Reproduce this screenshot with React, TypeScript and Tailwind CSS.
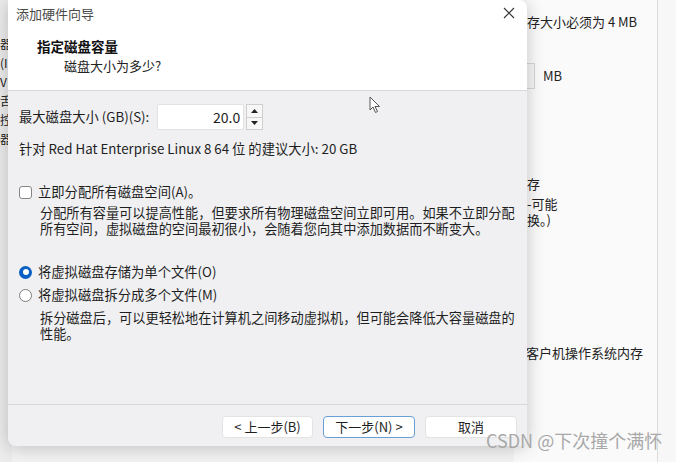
const FONT = "font-['Noto_Sans_CJK_SC','Noto_Sans',sans-serif]";

function BackWindow() {
  return (
    <div className="absolute inset-0 flex">
      {/* left strip of the window behind */}
      <div className="w-[12px] h-full bg-[#ececec] flex flex-col pt-[34px] text-[12px] leading-[19px] text-[#222] overflow-hidden">
        <span>器</span>
        <span>(I</span>
        <span>V</span>
        <span>舌</span>
        <span>控</span>
        <span>器</span>
      </div>
      <div className="w-[502px] h-full bg-[#f3f3f3]" />
      {/* right part of the window behind */}
      <div className="w-[143px] h-full bg-[#fafafa] flex flex-col text-[13px] text-[#222] whitespace-nowrap">
        <div className="mt-[13px] leading-[18px]">内存大小必须为 4 MB</div>
        <div className="mt-[32px] flex items-center">
          <div className="w-[21px] h-[26px] border border-[#d6d6d6] bg-[#f6f6f6]" />
          <span className="ml-[8px] leading-[18px]">MB</span>
        </div>
        <div className="mt-[86px] leading-[18px]">内存</div>
        <div className="mt-[3px] leading-[16px]">交-可能</div>
        <div className="leading-[16px]">交换。)</div>
        <div className="mt-[116px] ml-[12px] leading-[18px]">客户机操作系统内存</div>
      </div>
      <div className="w-[19px] h-full border-l border-[#dcdcdc] bg-[#f7f7f7]" />
    </div>
  );
}

function Radio({ checked }: { checked?: boolean }) {
  if (checked) {
    return (
      <div className="w-[13px] h-[13px] rounded-full bg-[#0a5fc4] flex items-center justify-center">
        <div className="w-[6px] h-[6px] rounded-full bg-white" />
      </div>
    );
  }
  return <div className="w-[13px] h-[13px] rounded-full border border-[#7d7d7d] bg-white" />;
}

function Dialog() {
  return (
    <div className="absolute left-[8px] top-0 w-[519px] h-[446px] flex flex-col rounded-tr-[8px] rounded-b-[8px] overflow-hidden bg-[#f0f0f2] shadow-[0_2px_18px_rgba(0,0,0,0.22)]">
      {/* header */}
      <div className="bg-white h-[91px] flex flex-col border-b border-[#d7d7d7] shrink-0">
        <div className="h-[28px] flex items-center justify-between pl-[8px] pr-[12px]">
          <span className="text-[13px] leading-[18px] text-[#4a4a4a]">添加硬件向导</span>
          <svg width="12" height="12" viewBox="0 0 12 12" className="mt-[-2px]">
            <path d="M1 1 L11 11 M11 1 L1 11" stroke="#333" strokeWidth="1.1" />
          </svg>
        </div>
        <div className="mt-[9px] pl-[29px] text-[13.5px] leading-[18px] font-bold text-[#111]">指定磁盘容量</div>
        <div className="mt-[2px] pl-[56px] text-[13px] leading-[18px] text-[#222]">磁盘大小为多少?</div>
      </div>

      {/* body */}
      <div className="flex-1 flex flex-col pl-[11px] text-[13.3px] text-[#1e1e1e]">
        <div className="mt-[13px] flex items-center">
          <span className="leading-[18px]">最大磁盘大小 (GB)(S):</span>
          <div className="ml-[8px] w-[87px] h-[26px] bg-white border border-[#e2e2e2] rounded-[2px] flex items-center justify-end pr-[3px] text-[14px]">
            20.0
          </div>
          <div className="ml-[2px] w-[17px] h-[26px] bg-[#f7f7f7] border border-[#cfcfcf] flex flex-col">
            <div className="flex-1 flex items-center justify-center border-b border-[#cfcfcf]">
              <svg width="7" height="4" viewBox="0 0 7 4"><path d="M0 4 L3.5 0 L7 4 Z" fill="#222" /></svg>
            </div>
            <div className="flex-1 flex items-center justify-center">
              <svg width="7" height="4" viewBox="0 0 7 4"><path d="M0 0 L3.5 4 L7 0 Z" fill="#222" /></svg>
            </div>
          </div>
        </div>
        <div className="mt-[11px] leading-[16px]">针对 Red Hat Enterprise Linux 8 64 位 的建议大小: 20 GB</div>

        <div className="mt-[27px] flex items-center">
          <div className="w-[13px] h-[13px] rounded-[3px] border border-[#858585] bg-white" />
          <span className="ml-[6px] leading-[16px]">立即分配所有磁盘空间(A)。</span>
        </div>
        <div className="mt-[5px] pl-[21px] text-[13.2px] leading-[15.5px] whitespace-nowrap">
          <div>分配所有容量可以提高性能，但要求所有物理磁盘空间立即可用。如果不立即分配</div>
          <div>所有空间，虚拟磁盘的空间最初很小，会随着您向其中添加数据而不断变大。</div>
        </div>

        <div className="mt-[28px] flex items-center">
          <Radio checked />
          <span className="ml-[6px] leading-[16px]">将虚拟磁盘存储为单个文件(O)</span>
        </div>
        <div className="mt-[7px] flex items-center">
          <Radio />
          <span className="ml-[6px] leading-[16px]">将虚拟磁盘拆分成多个文件(M)</span>
        </div>
        <div className="mt-[7px] pl-[21px] text-[13.2px] leading-[16px] whitespace-nowrap">
          <div>拆分磁盘后，可以更轻松地在计算机之间移动虚拟机，但可能会降低大容量磁盘的</div>
          <div>性能。</div>
        </div>
      </div>

      {/* footer */}
      <div className="h-[42px] shrink-0 border-t border-[#d7d7d7] flex items-start justify-end pt-[11px] pr-[10px] gap-[10px] text-[13px] text-[#1e1e1e]">
        <button className="w-[91px] h-[22px] bg-white border border-[#e3e3e3] rounded-[4px] leading-[18px]">&lt; 上一步(B)</button>
        <button className="w-[92px] h-[22px] bg-white border border-[#6a9fd6] rounded-[4px] leading-[18px]">下一步(N) &gt;</button>
        <button className="w-[92px] h-[22px] bg-white border border-[#e3e3e3] rounded-[4px] leading-[18px]">取消</button>
      </div>
    </div>
  );
}

function Cursor() {
  return (
    <svg className="absolute left-[369px] top-[96px]" width="12" height="18" viewBox="0 0 12 18">
      <path d="M1 1 L1 14 L4 11 L6.5 16.5 L8.5 15.5 L6 10.5 L10.5 10.5 Z" fill="#fff" stroke="#555" strokeWidth="1" strokeLinejoin="round" />
    </svg>
  );
}

export default function App() {
  return (
    <div className={`relative w-[676px] h-[462px] overflow-hidden bg-[#f3f3f3] ${FONT}`}>
      <BackWindow />
      <Dialog />
      <Cursor />
      <div className="absolute left-[486px] top-[428px] text-[18px] leading-[24px] text-[#a8a8a8] whitespace-nowrap">
        CSDN @下次撞个满怀
      </div>
    </div>
  );
}
